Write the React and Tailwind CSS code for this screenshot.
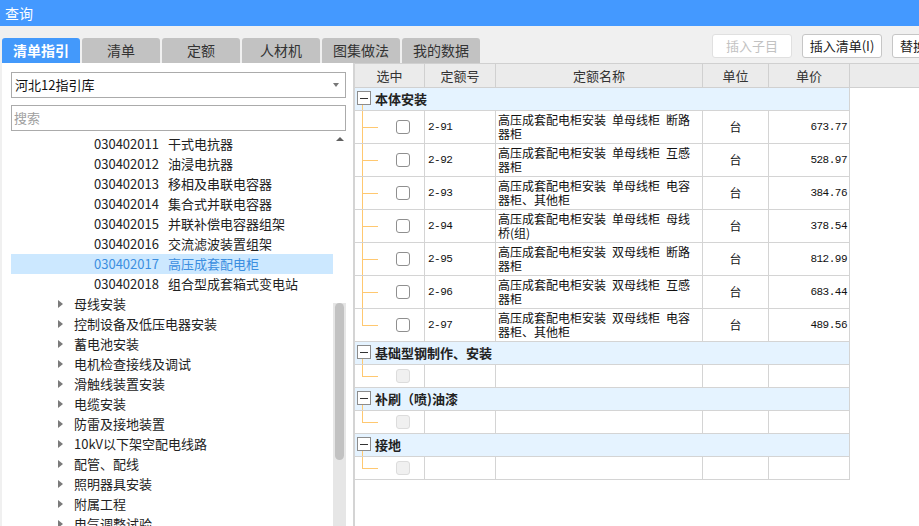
import React from "react";

const tabs = ["清单指引", "清单", "定额", "人材机", "图集做法", "我的数据"];

const leaves = [
  ["030402011", "干式电抗器"],
  ["030402012", "油浸电抗器"],
  ["030402013", "移相及串联电容器"],
  ["030402014", "集合式并联电容器"],
  ["030402015", "并联补偿电容器组架"],
  ["030402016", "交流滤波装置组架"],
  ["030402017", "高压成套配电柜"],
  ["030402018", "组合型成套箱式变电站"],
];

const folders = [
  "母线安装",
  "控制设备及低压电器安装",
  "蓄电池安装",
  "电机检查接线及调试",
  "滑触线装置安装",
  "电缆安装",
  "防雷及接地装置",
  "10kV以下架空配电线路",
  "配管、配线",
  "照明器具安装",
  "附属工程",
  "电气调整试验",
];

const rows = [
  ["2-91", "单母线柜", "断路", "器柜", "673.77"],
  ["2-92", "单母线柜", "互感", "器柜", "528.97"],
  ["2-93", "单母线柜", "电容", "器柜、其他柜", "384.76"],
  ["2-94", "单母线柜", "母线", "桥(组)", "378.54"],
  ["2-95", "双母线柜", "断路", "器柜", "812.99"],
  ["2-96", "双母线柜", "互感", "器柜", "683.44"],
  ["2-97", "双母线柜", "电容", "器柜、其他柜", "489.56"],
];

const cols = "grid grid-cols-[70px_71px_207px_66px_81px]";

function GroupRow({ title }) {
  return (
    <div className="h-[23px] w-[495px] flex bg-[#e5f3ff] border-b border-r border-[#d4d4d4]">
      <div className="flex flex-col pl-[2px] pt-[3px]">
        <div className="w-[14px] h-[14px] border border-[#8c8c8c] bg-white flex items-center justify-center">
          <div className="w-[8px] h-px bg-[#333]" />
        </div>
        <div className="flex-1 ml-[5px] border-l border-[#ffc870]" />
      </div>
      <div className="ml-[4px] self-center text-[13px] leading-[16px] font-bold text-[#222]">{title}</div>
    </div>
  );
}

function Connector({ last }) {
  return (
    <div className="ml-[7px] w-[16px] self-stretch flex flex-col">
      <div className="flex-1 border-l border-b border-[#ffc870]" />
      <div className={last ? "flex-1" : "flex-1 border-l border-[#ffc870]"} />
    </div>
  );
}

function DataRow({ r, last }) {
  return (
    <div className={cols + " h-[33px]"}>
      <div className="flex items-stretch border-r border-b border-[#d4d4d4]">
        <Connector last={last} />
        <div className="self-center ml-[18px] w-[14px] h-[14px] border border-[#8f8f8f] rounded-[3px] bg-white" />
      </div>
      <div className="flex items-center pl-[3px] border-r border-b border-[#d4d4d4] font-['Liberation_Mono',monospace] text-[11px] tracking-[-0.5px] text-[#111]">
        {r[0]}
      </div>
      <div className="pl-[2px] pt-[2px] border-r border-b border-[#d4d4d4] text-[12px] leading-[14px] text-[#111] whitespace-nowrap overflow-hidden">
        <div className="flex">
          <span>高压成套配电柜安装</span>
          <span className="ml-[6px]">{r[1]}</span>
          <span className="ml-[6px]">{r[2]}</span>
        </div>
        <div>{r[3]}</div>
      </div>
      <div className="flex items-center justify-center border-r border-b border-[#d4d4d4] text-[12px] text-[#111]">台</div>
      <div className="flex items-center justify-end pr-[2px] border-r border-b border-[#d4d4d4] font-['Liberation_Mono',monospace] text-[11px] tracking-[-0.5px] text-[#111]">
        {r[4]}
      </div>
    </div>
  );
}

function EmptyRow() {
  return (
    <div className={cols + " h-[23px]"}>
      <div className="flex items-stretch border-r border-b border-[#d4d4d4]">
        <Connector last />
        <div className="self-center ml-[18px] w-[14px] h-[14px] border border-[#dcdcdc] rounded-[3px] bg-[#f0f0f0]" />
      </div>
      <div className="border-r border-b border-[#d4d4d4]" />
      <div className="border-r border-b border-[#d4d4d4]" />
      <div className="border-r border-b border-[#d4d4d4]" />
      <div className="border-r border-b border-[#d4d4d4]" />
    </div>
  );
}

export default function App() {
  return (
    <div className="w-[919px] h-[526px] overflow-hidden bg-[#f0f0f0] flex flex-col font-['Noto_Sans_CJK_SC','Microsoft_YaHei',sans-serif]">
      {/* title */}
      <div className="h-[26px] shrink-0 bg-[#4499ff] flex items-center pl-[5px] text-[14px] text-white">查询</div>

      {/* tabs + buttons */}
      <div className="h-[37px] shrink-0 flex pl-[2px]">
        <div className="flex items-end gap-[2px] shrink-0">
          {tabs.map((t, i) => (
            <div
              key={t}
              className={
                i === 0
                  ? "w-[78px] h-[25px] rounded-t-[3px] bg-[#4399fb] text-white font-bold text-[14px] flex items-center justify-center"
                  : "w-[78px] h-[25px] rounded-t-[3px] bg-[#c2c2c2] text-[#333] text-[14px] flex items-center justify-center"
              }
            >
              {t}
            </div>
          ))}
        </div>
        <div className="flex gap-[10px] ml-[232px] mt-[8px] shrink-0 self-start">
          <div className="w-[80px] h-[24px] shrink-0 rounded-[3px] border border-[#e0e0e0] bg-white text-[13px] text-[#c2c2c2] flex items-center justify-center">插入子目</div>
          <div className="w-[80px] h-[24px] shrink-0 rounded-[3px] border border-[#c6c6c6] bg-white text-[13px] text-[#222] flex items-center justify-center">插入清单(I)</div>
          <div className="w-[80px] h-[24px] shrink-0 rounded-[3px] border border-[#c6c6c6] bg-white text-[13px] text-[#222] flex items-center pl-[7px]">替换</div>
        </div>
      </div>

      {/* body */}
      <div className="flex-1 flex min-h-0">
        {/* left panel */}
        <div className="w-[351px] ml-[2px] bg-white flex flex-col pl-[9px] pr-[7px] pt-[9px] min-h-0">
          <div className="h-[26px] shrink-0 border border-[#ababab] flex items-center justify-between pl-[3px] pr-[6px] text-[13px] text-[#111]">
            <span>河北12指引库</span>
            <span className="w-0 h-0 border-x-[3px] border-x-transparent border-t-[4px] border-t-[#777]" />
          </div>
          <div className="h-[26px] shrink-0 mt-[7px] border border-[#ababab] flex items-center pl-[2px] text-[13px] text-[#a0a0a0]">搜索</div>
          <div className="mt-[3px] flex-1 flex min-h-0 overflow-hidden">
            <div className="w-[322px] flex flex-col text-[13px] text-[#222]">
              {leaves.map(([c, n]) => (
                <div
                  key={c}
                  className={
                    c === "030402017"
                      ? "h-[20px] shrink-0 flex items-center pl-[83px] bg-[#cce8ff] text-[#3b8ee0]"
                      : "h-[20px] shrink-0 flex items-center pl-[83px]"
                  }
                >
                  <span>{c}</span>
                  <span className="ml-[9px]">{n}</span>
                </div>
              ))}
              {folders.map((f) => (
                <div key={f} className="h-[20px] shrink-0 flex items-center pl-[47px]">
                  <span className="w-0 h-0 border-y-[4px] border-y-transparent border-l-[5px] border-l-[#7a7a7a]" />
                  <span className="ml-[11px]">{f}</span>
                </div>
              ))}
            </div>
            <div className="w-[13px] flex flex-col">
              <div className="h-[10px] flex items-center justify-center">
                <span className="w-0 h-0 border-x-[4px] border-x-transparent border-b-[4px] border-b-[#606060]" />
              </div>
              <div className="h-[159px]" />
              <div className="flex-1 bg-[#e6e6e6]">
                <div className="mx-[2px] h-[157px] rounded-full bg-[#c2c2c2]" />
              </div>
            </div>
          </div>
        </div>

        {/* right panel */}
        <div className="flex-1 bg-white border-l-2 border-[#d4d4d4] flex flex-col">
          <div className={cols + " h-[25px] bg-[#ebebeb] border-y border-[#d0d0d0] text-[13px] text-[#333]"}>
            {["选中", "定额号", "定额名称", "单位", "单价"].map((h) => (
              <div key={h} className="flex items-center justify-center border-r border-[#d0d0d0]">{h}</div>
            ))}
          </div>
          <GroupRow title="本体安装" />
          {rows.map((r, i) => (
            <DataRow key={r[0]} r={r} last={i === rows.length - 1} />
          ))}
          <GroupRow title="基础型钢制作、安装" />
          <EmptyRow />
          <GroupRow title="补刷（喷)油漆" />
          <EmptyRow />
          <GroupRow title="接地" />
          <EmptyRow />
        </div>
      </div>
    </div>
  );
}
